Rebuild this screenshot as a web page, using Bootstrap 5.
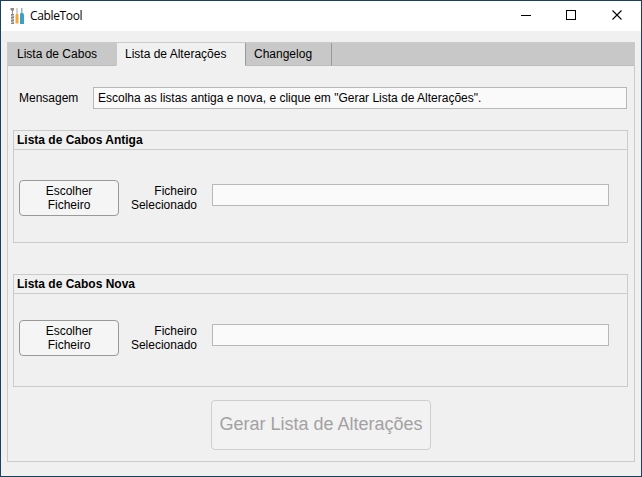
<!DOCTYPE html>
<html lang="pt">
<head>
<meta charset="utf-8">
<title>CableTool</title>
<link href="https://cdn.jsdelivr.net/npm/bootstrap@5.3.0/dist/css/bootstrap.min.css" rel="stylesheet">
<style>
body{font:12px/14px "Liberation Sans",Arial,sans-serif;color:#000;background:#f0f0f0}
.app-window{width:642px;height:477px;border:1px solid #1b3f5e;background:#f0f0f0}
.title-bar{height:30px;background:#fff;padding-left:9px}
.title-text{font:12px/16px "Open Sans","Noto Sans",sans-serif;margin-left:6px;letter-spacing:-.35px}
.win-btn{width:46px;height:30px}
.tab-frame{margin:11px 6px 0;height:420px;border:1px solid #cbcbcb}
.tab-strip{height:23px;background:#c8c8c8}
.tab-strip .nav-link{border:0;border-radius:0;color:#000;padding:0 8px;height:23px;line-height:22px;border-bottom:1px solid #bcbcbc}
.tab-strip .rest{border-bottom:1px solid #bcbcbc}
.tab-strip .nav-link.active{background:#f0f0f0;border-bottom-color:#f0f0f0;border-left:1px solid #c8c8c8;border-right:1px solid #999}
.tab-strip .nav-link.last-tab{border-right:1px solid #999}
.tab-strip .tab-a{width:108px;padding-left:9px}.tab-b{width:130px}.tab-c{width:86px}
.pane{padding:21px 6px 0 5px}
.field{height:22px;border:1px solid #b8b8b8;border-radius:0;background:#fafafa;padding:0 4px;font-size:12px;line-height:20px;color:#000;min-height:0}
.field:focus{box-shadow:none;background:#fafafa}
.msg-row{height:22px;padding:0 1px 0 6px}
.msg-label{width:74px}
.panel{height:113px;border:1px solid #cbcbcb;border-radius:0;background:transparent;color:#000}
.panel-title{height:19px;border-bottom:1px solid #cbcbcb;padding:0 3px;line-height:18px;font-weight:bold}
.panel-row{padding:30px 18px 0 5px}
.panel-new .panel-row{padding-top:26px}
.pick{width:100px;height:36px;border:1px solid #999;border-radius:4px;background:#f5f5f5;font-size:12px;line-height:14px;padding:0 20px;color:#000}
.pick-label{width:78px;margin-right:15px}
.generate{width:220px;height:50px;border:1px solid #cfcfcf!important;border-radius:4px;background:#f2f2f2!important;color:#a2a2a2!important;opacity:1!important;font-size:18px;line-height:22px;padding:0 0 2px}
.gap-a{margin-top:21px}.gap-b{margin-top:31px}.gap-c{margin:13px 0 0 198px}
</style>
<script src="https://cdn.jsdelivr.net/npm/bootstrap@5.3.0/dist/js/bootstrap.bundle.min.js"></script>
</head>
<body class="overflow-hidden">
<div class="app-window">
  <header class="title-bar d-flex align-items-center">
    <svg width="14" height="16" viewBox="0 0 14 16">
      <path d="M.5 0H4v2l-1 1v3H2V3L.5 2z" fill="#8d8a87"/><path d="M1 6h3v10H1z" fill="#8b8782"/><path d="M1 8.500l3-1M1 11.500l3-1M1 14.500l3-1" stroke="#ded8d0"/>
      <path d="M6.500 0h1v6h-1z" fill="#a8a8a8"/><path d="M6 6h2l.5 1v8.500h-3V7z" fill="#f3ab38"/>
      <path d="M11 0h1.500v5H11z" fill="#9eb3bc"/><path d="M10.500 5H13l1 1.500V16h-4V6.500z" fill="#3c9fc6"/>
    </svg>
    <span class="title-text">CableTool</span>
    <div class="d-flex ms-auto">
      <span class="win-btn"><svg width="46" height="30"><path d="M18 14.500h10" stroke="#000"/></svg></span>
      <span class="win-btn"><svg width="46" height="30"><rect x="17.500" y="9.500" width="9" height="9" fill="none" stroke="#000"/></svg></span>
      <span class="win-btn"><svg width="46" height="30"><path d="M17.500 9.500l9 9M26.500 9.500l-9 9" stroke="#000" stroke-width="1.100"/></svg></span>
    </div>
  </header>
  <main class="tab-frame">
    <nav class="nav nav-tabs flex-nowrap border-0 tab-strip">
      <a class="nav-link m-0 tab-a">Lista de Cabos</a>
      <a class="nav-link m-0 active tab-b">Lista de Alterações</a>
      <a class="nav-link m-0 last-tab tab-c">Changelog</a>
      <span class="rest flex-grow-1"></span>
    </nav>
    <div class="pane">
      <div class="msg-row d-flex align-items-center">
        <label class="msg-label flex-shrink-0" for="msg">Mensagem</label>
        <input id="msg" class="form-control field" readonly value="Escolha as listas antiga e nova, e clique em &quot;Gerar Lista de Alterações&quot;.">
      </div>
      <section class="card panel gap-a">
        <div class="panel-title">Lista de Cabos Antiga</div>
        <div class="panel-row d-flex align-items-start">
          <button class="btn pick flex-shrink-0">Escolher Ficheiro</button>
          <label class="pick-label text-end flex-shrink-0 pt-1">Ficheiro Selecionado</label>
          <input class="form-control field mt-1" readonly>
        </div>
      </section>
      <section class="card panel panel-new gap-b">
        <div class="panel-title">Lista de Cabos Nova</div>
        <div class="panel-row d-flex align-items-start">
          <button class="btn pick flex-shrink-0">Escolher Ficheiro</button>
          <label class="pick-label text-end flex-shrink-0 pt-1">Ficheiro Selecionado</label>
          <input class="form-control field mt-1" readonly>
        </div>
      </section>
      <button class="btn generate gap-c" disabled>Gerar Lista de Alterações</button>
    </div>
  </main>
</div>
</body>
</html>
